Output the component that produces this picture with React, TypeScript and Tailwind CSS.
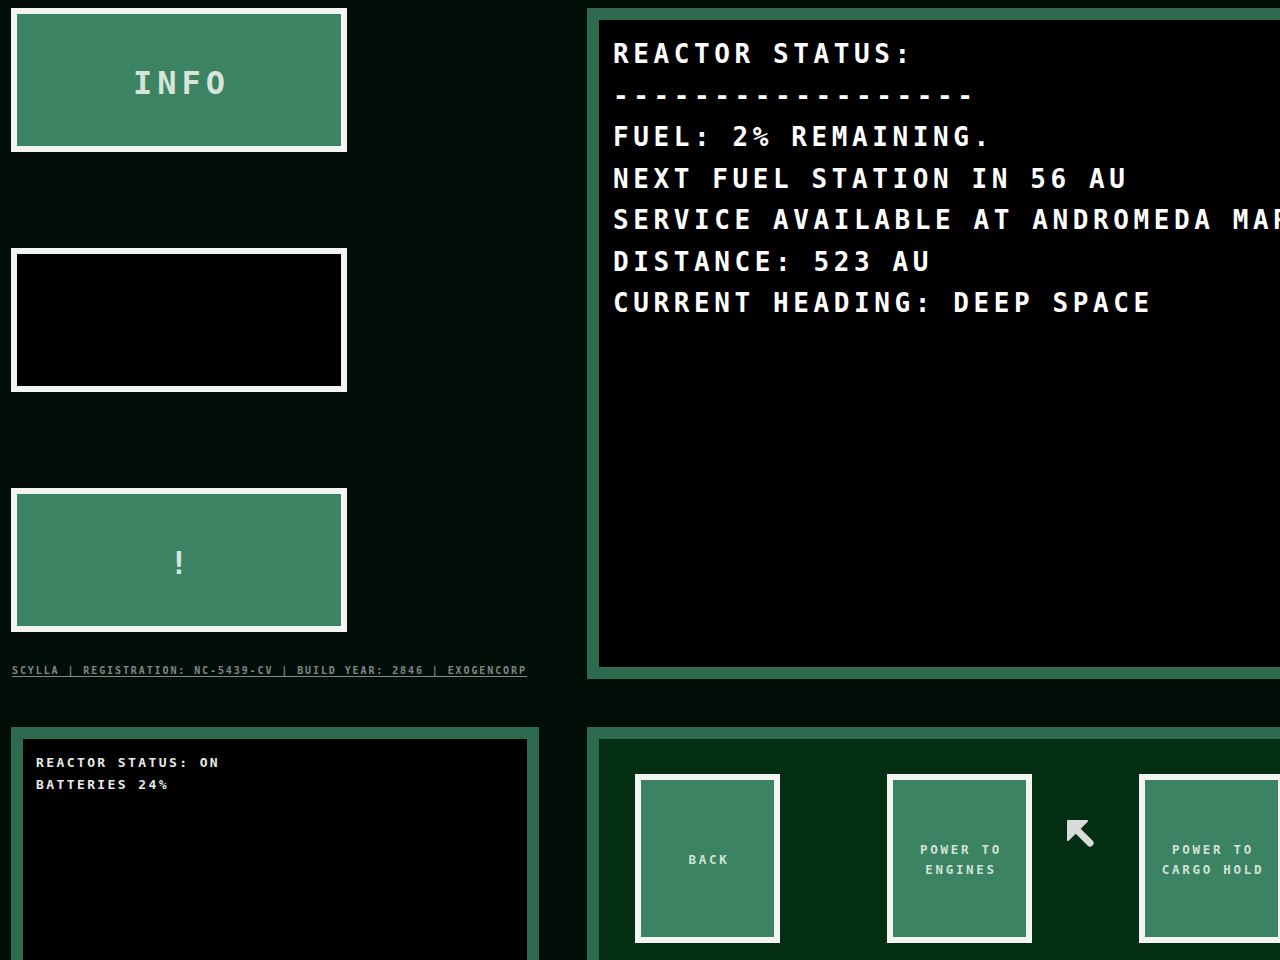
import { ReactNode } from "react"

const mono = "font-['DejaVu_Sans_Mono','Liberation_Mono',monospace]"

const reactorLines = [
    "REACTOR STATUS:",
    "------------------",
    "FUEL: 2% REMAINING.",
    "NEXT FUEL STATION IN 56 AU",
    "SERVICE AVAILABLE AT ANDROMEDA MARKET",
    "DISTANCE: 523 AU",
    "CURRENT HEADING: DEEP SPACE",
]

const SideButton = ({ children }: { children?: ReactNode }) => (
    <button className="flex items-center justify-center w-[336px] h-[144px] border-[6px] border-[#f3f5f3] bg-[#3b8362] text-[32px] leading-none font-bold tracking-[5px] pl-[5px] pt-[5px] text-[#d6e4da]">
        {children}
    </button>
)

const ActionButton = ({ lines }: { lines: string[] }) => (
    <button className="flex flex-col items-center justify-center shrink-0 w-[145px] h-[169px] border-[6px] border-[#f3f5f3] bg-[#3b8362] text-[12.5px] leading-[20px] font-bold tracking-[2.7px] pl-[3px] pt-[2px] text-[#d2e2d7]">
        {lines.map(l => <span key={l}>{l}</span>)}
    </button>
)

// pointer drawn over the action bar
const Pointer = () => (
    <svg className="absolute left-[1066px] top-[819px]" width="28" height="28" viewBox="0 0 28 28">
        <path d="M2 2 L21 2 L2 21 Z" fill="#d9dcda" stroke="#d9dcda" strokeWidth="2" strokeLinejoin="round" />
        <path d="M7 7 L24 24" stroke="#d9dcda" strokeWidth="7" strokeLinecap="round" />
    </svg>
)

export default function App() {
    return (
        <div className={`relative w-[1280px] h-[960px] overflow-hidden bg-[#020f08] ${mono}`}>
            <div className="grid grid-cols-[528px_760px] grid-rows-[671px_300px] gap-x-[48px] gap-y-[48px] pl-[11px] pt-[8px]">
                {/* left column: side buttons + ship tag */}
                <div className="flex flex-col">
                    <div className="flex flex-col gap-[96px]">
                        <SideButton>INFO</SideButton>
                        <div className="w-[336px] h-[144px] border-[6px] border-[#f3f5f3] bg-black" />
                        <SideButton>!</SideButton>
                    </div>
                    <p className="mt-[34px] pl-[1px] text-[10px] leading-[10px] font-bold tracking-[1.9px] text-[#7f8983] underline underline-offset-2 whitespace-nowrap">
                        SCYLLA | REGISTRATION: NC-5439-CV | BUILD YEAR: 2846 | EXOGENCORP
                    </p>
                </div>

                {/* main terminal */}
                <div className="border-[12px] border-[#2e6a4d] bg-black p-[14px] text-white text-[26px] leading-[41.5px] font-bold tracking-[4.6px] [word-spacing:-2px] whitespace-nowrap overflow-hidden">
                    {reactorLines.map((l, i) => <div key={i}>{l}</div>)}
                </div>

                {/* small status screen */}
                <div className="border-[12px] border-[#2e6a4d] bg-black p-[13px] text-[13px] leading-[22px] font-bold tracking-[2.4px] text-[#e7ebe8]">
                    <div>REACTOR STATUS: ON</div>
                    <div>BATTERIES 24%</div>
                </div>

                {/* action bar */}
                <div className="flex gap-[107px] border-[12px] border-[#2e6a4d] bg-[#032e12] pl-[36px] pt-[35px]">
                    <ActionButton lines={["BACK"]} />
                    <ActionButton lines={["POWER TO", "ENGINES"]} />
                    <ActionButton lines={["POWER TO", "CARGO HOLD"]} />
                </div>
            </div>
            <Pointer />
        </div>
    )
}
